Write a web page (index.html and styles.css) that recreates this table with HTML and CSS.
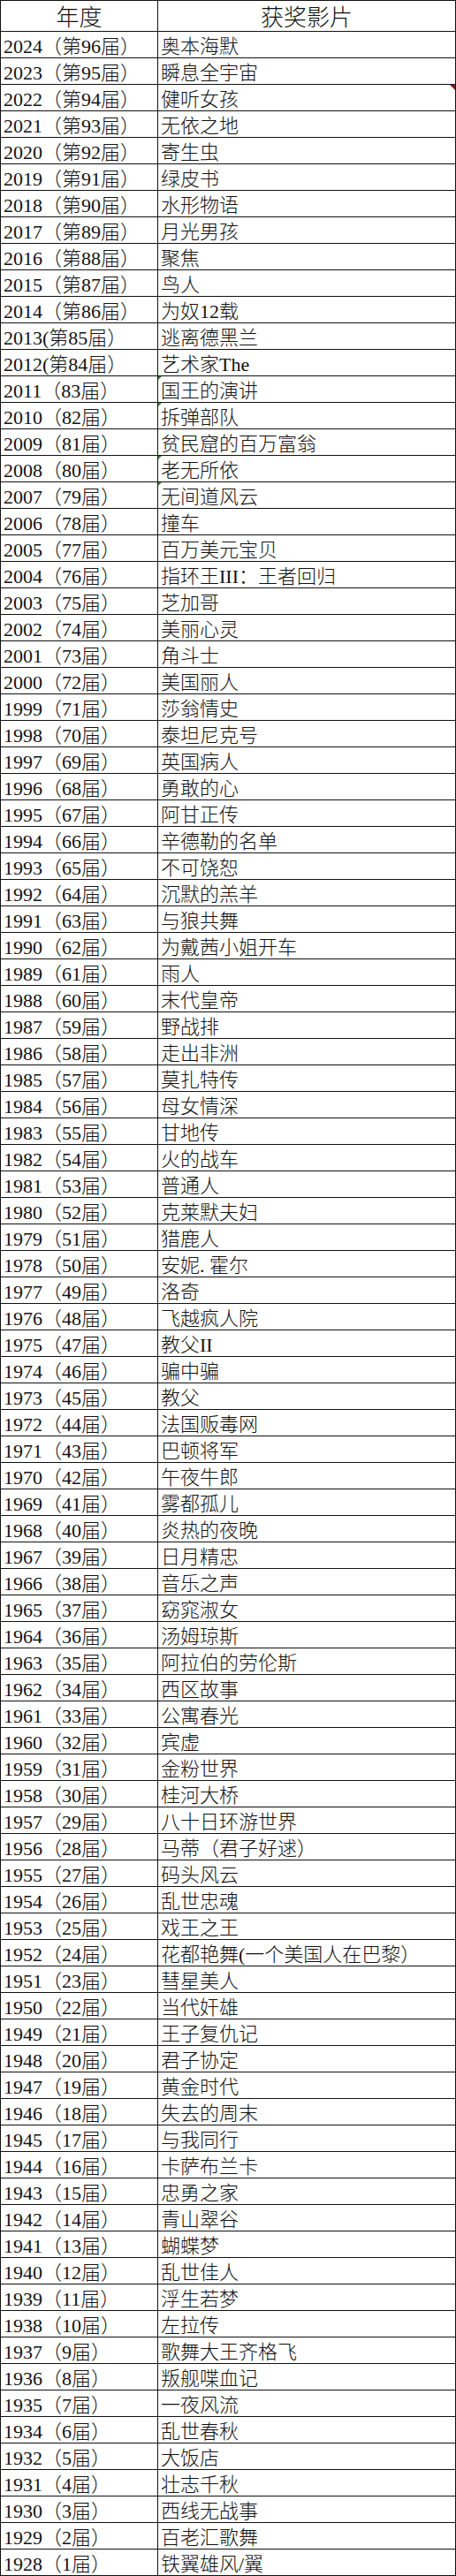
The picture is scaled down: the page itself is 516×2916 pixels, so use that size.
FILE: index.html
```html
<!DOCTYPE html>
<html lang="zh-CN">
<head>
<meta charset="utf-8">
<title>奥斯卡最佳影片</title>
<link rel="stylesheet" href="styles.css">
</head>
<body>
<div class="sheet">
<div class="cell head">年度</div><div class="cell head">获奖影片</div>
<div class="cell">2024（第96届）</div><div class="cell">奥本海默</div>
<div class="cell">2023（第95届）</div><div class="cell">瞬息全宇宙</div>
<div class="cell">2022（第94届）</div><div class="cell note">健听女孩</div>
<div class="cell">2021（第93届）</div><div class="cell">无依之地</div>
<div class="cell">2020（第92届）</div><div class="cell">寄生虫</div>
<div class="cell">2019（第91届）</div><div class="cell">绿皮书</div>
<div class="cell">2018（第90届）</div><div class="cell">水形物语</div>
<div class="cell">2017（第89届）</div><div class="cell">月光男孩</div>
<div class="cell">2016（第88届）</div><div class="cell">聚焦</div>
<div class="cell">2015（第87届）</div><div class="cell">鸟人</div>
<div class="cell">2014（第86届）</div><div class="cell">为奴12载</div>
<div class="cell">2013(第85届）</div><div class="cell">逃离德黑兰</div>
<div class="cell">2012(第84届）</div><div class="cell">艺术家The</div>
<div class="cell">2011（83届）</div><div class="cell flag">国王的演讲</div>
<div class="cell">2010（82届）</div><div class="cell flag">拆弹部队</div>
<div class="cell">2009（81届）</div><div class="cell">贫民窟的百万富翁</div>
<div class="cell">2008（80届）</div><div class="cell flag">老无所依</div>
<div class="cell">2007（79届）</div><div class="cell flag">无间道风云</div>
<div class="cell">2006（78届）</div><div class="cell">撞车</div>
<div class="cell">2005（77届）</div><div class="cell">百万美元宝贝</div>
<div class="cell">2004（76届）</div><div class="cell">指环王III：王者回归</div>
<div class="cell">2003（75届）</div><div class="cell">芝加哥</div>
<div class="cell">2002（74届）</div><div class="cell">美丽心灵</div>
<div class="cell">2001（73届）</div><div class="cell">角斗士</div>
<div class="cell">2000（72届）</div><div class="cell">美国丽人</div>
<div class="cell">1999（71届）</div><div class="cell">莎翁情史</div>
<div class="cell">1998（70届）</div><div class="cell">泰坦尼克号</div>
<div class="cell">1997（69届）</div><div class="cell">英国病人</div>
<div class="cell">1996（68届）</div><div class="cell">勇敢的心</div>
<div class="cell">1995（67届）</div><div class="cell">阿甘正传</div>
<div class="cell">1994（66届）</div><div class="cell">辛德勒的名单</div>
<div class="cell">1993（65届）</div><div class="cell">不可饶恕</div>
<div class="cell">1992（64届）</div><div class="cell">沉默的羔羊</div>
<div class="cell">1991（63届）</div><div class="cell">与狼共舞</div>
<div class="cell">1990（62届）</div><div class="cell">为戴茜小姐开车</div>
<div class="cell">1989（61届）</div><div class="cell">雨人</div>
<div class="cell">1988（60届）</div><div class="cell">末代皇帝</div>
<div class="cell">1987（59届）</div><div class="cell">野战排</div>
<div class="cell">1986（58届）</div><div class="cell">走出非洲</div>
<div class="cell">1985（57届）</div><div class="cell">莫扎特传</div>
<div class="cell">1984（56届）</div><div class="cell">母女情深</div>
<div class="cell">1983（55届）</div><div class="cell">甘地传</div>
<div class="cell">1982（54届）</div><div class="cell">火的战车</div>
<div class="cell">1981（53届）</div><div class="cell">普通人</div>
<div class="cell">1980（52届）</div><div class="cell">克莱默夫妇</div>
<div class="cell">1979（51届）</div><div class="cell">猎鹿人</div>
<div class="cell">1978（50届）</div><div class="cell">安妮. 霍尔</div>
<div class="cell">1977（49届）</div><div class="cell">洛奇</div>
<div class="cell">1976（48届）</div><div class="cell">飞越疯人院</div>
<div class="cell">1975（47届）</div><div class="cell">教父II</div>
<div class="cell">1974（46届）</div><div class="cell">骗中骗</div>
<div class="cell">1973（45届）</div><div class="cell">教父</div>
<div class="cell">1972（44届）</div><div class="cell">法国贩毒网</div>
<div class="cell">1971（43届）</div><div class="cell">巴顿将军</div>
<div class="cell">1970（42届）</div><div class="cell">午夜牛郎</div>
<div class="cell">1969（41届）</div><div class="cell">雾都孤儿</div>
<div class="cell">1968（40届）</div><div class="cell">炎热的夜晚</div>
<div class="cell">1967（39届）</div><div class="cell">日月精忠</div>
<div class="cell">1966（38届）</div><div class="cell">音乐之声</div>
<div class="cell">1965（37届）</div><div class="cell">窈窕淑女</div>
<div class="cell">1964（36届）</div><div class="cell">汤姆琼斯</div>
<div class="cell">1963（35届）</div><div class="cell">阿拉伯的劳伦斯</div>
<div class="cell">1962（34届）</div><div class="cell">西区故事</div>
<div class="cell">1961（33届）</div><div class="cell">公寓春光</div>
<div class="cell">1960（32届）</div><div class="cell">宾虚</div>
<div class="cell">1959（31届）</div><div class="cell">金粉世界</div>
<div class="cell">1958（30届）</div><div class="cell">桂河大桥</div>
<div class="cell">1957（29届）</div><div class="cell">八十日环游世界</div>
<div class="cell">1956（28届）</div><div class="cell">马蒂（君子好逑）</div>
<div class="cell">1955（27届）</div><div class="cell">码头风云</div>
<div class="cell">1954（26届）</div><div class="cell">乱世忠魂</div>
<div class="cell">1953（25届）</div><div class="cell">戏王之王</div>
<div class="cell">1952（24届）</div><div class="cell">花都艳舞(一个美国人在巴黎）</div>
<div class="cell">1951（23届）</div><div class="cell">彗星美人</div>
<div class="cell">1950（22届）</div><div class="cell">当代奸雄</div>
<div class="cell">1949（21届）</div><div class="cell">王子复仇记</div>
<div class="cell">1948（20届）</div><div class="cell">君子协定</div>
<div class="cell">1947（19届）</div><div class="cell">黄金时代</div>
<div class="cell">1946（18届）</div><div class="cell">失去的周末</div>
<div class="cell">1945（17届）</div><div class="cell">与我同行</div>
<div class="cell">1944（16届）</div><div class="cell">卡萨布兰卡</div>
<div class="cell">1943（15届）</div><div class="cell">忠勇之家</div>
<div class="cell">1942（14届）</div><div class="cell">青山翠谷</div>
<div class="cell">1941（13届）</div><div class="cell">蝴蝶梦</div>
<div class="cell">1940（12届）</div><div class="cell">乱世佳人</div>
<div class="cell">1939（11届）</div><div class="cell">浮生若梦</div>
<div class="cell">1938（10届）</div><div class="cell">左拉传</div>
<div class="cell">1937（9届）</div><div class="cell">歌舞大王齐格飞</div>
<div class="cell">1936（8届）</div><div class="cell">叛舰喋血记</div>
<div class="cell">1935（7届）</div><div class="cell">一夜风流</div>
<div class="cell">1934（6届）</div><div class="cell">乱世春秋</div>
<div class="cell">1932（5届）</div><div class="cell">大饭店</div>
<div class="cell">1931（4届）</div><div class="cell">壮志千秋</div>
<div class="cell">1930（3届）</div><div class="cell">西线无战事</div>
<div class="cell">1929（2届）</div><div class="cell">百老汇歌舞</div>
<div class="cell">1928（1届）</div><div class="cell">铁翼雄风/翼</div>
</div>
</body>
</html>
```

FILE: styles.css
```css
html, body {
  margin: 0;
  padding: 0;
  background: #ffffff;
}

.sheet {
  display: grid;
  grid-template-columns: 177px 336px;
  grid-template-rows: 34px repeat(96, 29px);
  gap: 1px;
  width: 516px;
  box-sizing: border-box;
  border: 1px solid #111;
  background: #111;
  font-family: "Liberation Serif", "Noto Sans CJK SC", serif;
  font-weight: 300;
  color: #111;
}

.cell {
  position: relative;
  background: #ffffff;
  font-size: 22px;
  line-height: 22px;
  padding: 6px 0 0 3px;
  white-space: nowrap;
  overflow: hidden;
}

.head {
  font-size: 26px;
  line-height: 26px;
  padding: 7px 0 0 0;
  text-align: center;
}

.note::after {
  content: "";
  position: absolute;
  top: 0;
  right: 0;
  border-top: 6px solid #8e1b1b;
  border-left: 6px solid transparent;
}

.flag::before {
  content: "";
  position: absolute;
  top: 0;
  left: 0;
  border-top: 4px solid #2c8a2c;
  border-right: 4px solid transparent;
}
```
